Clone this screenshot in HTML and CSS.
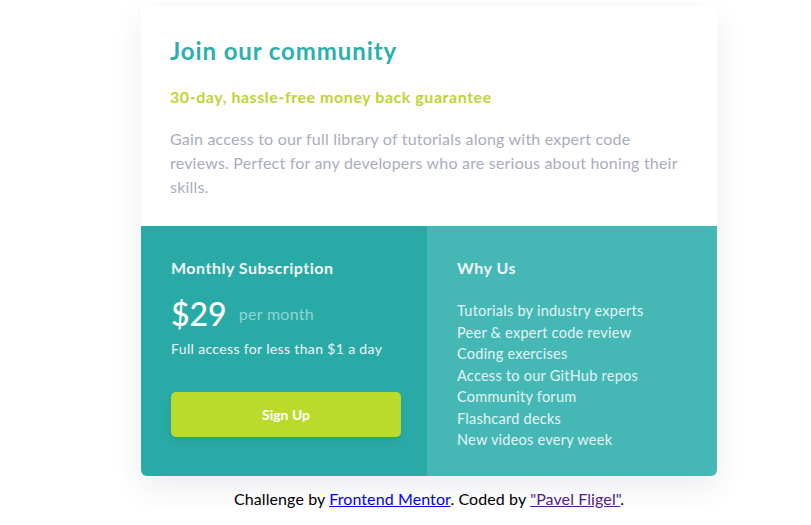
FILE: index.html
```html
<!DOCTYPE html>
<html lang="en">
<head>
<meta charset="utf-8">
<title>Single price grid component</title>
<link rel="stylesheet" href="styles.css">
</head>
<body>
<main class="page">
  <article class="card">
    <section class="intro">
      <h1 class="intro-title">Join our community</h1>
      <h2 class="intro-sub">30-day, hassle-free money back guarantee</h2>
      <p class="intro-text">Gain access to our full library of tutorials along with expert code reviews. Perfect for any developers who are serious about honing their skills.</p>
    </section>
    <div class="bottom">
      <section class="sub">
        <h3 class="panel-title">Monthly Subscription</h3>
        <div class="price"><span class="price-amount">$29</span><span class="price-per">per month</span></div>
        <p class="sub-text">Full access for less than $1 a day</p>
        <button class="signup" type="button">Sign Up</button>
      </section>
      <section class="why">
        <h3 class="panel-title">Why Us</h3>
        <ul class="why-list">
          <li>Tutorials by industry experts</li>
          <li>Peer &amp; expert code review</li>
          <li>Coding exercises</li>
          <li>Access to our GitHub repos</li>
          <li>Community forum</li>
          <li>Flashcard decks</li>
          <li>New videos every week</li>
        </ul>
      </section>
    </div>
  </article>
  <footer class="attribution">Challenge by <a href="#" class="link-fm">Frontend Mentor</a>. Coded by <a href="#" class="link-me">"Pavel Fligel"</a>.</footer>
</main>
</body>
</html>
```
FILE: styles.css
```css
* { box-sizing: border-box; }
html, body { margin: 0; padding: 0; background: #ffffff; }
body { font-family: Lato, "Noto Sans", sans-serif; }

.page {
  width: 576px;
  margin-left: 141px;
  padding-top: 6px;
}

.card {
  background: #ffffff;
  border-radius: 6px;
  box-shadow: 0 12px 30px rgba(40, 60, 90, 0.09);
  overflow: hidden;
}

.intro { padding: 30px 29px 27px; }

.intro-title {
  margin: 0;
  font-size: 24px;
  line-height: 29px;
  font-weight: 700;
  letter-spacing: 0.9px;
  color: #2bb0ac;
}

.intro-sub {
  margin: 22px 0 0;
  font-size: 16px;
  line-height: 20px;
  font-weight: 700;
  letter-spacing: 0.55px;
  color: #bcd535;
}

.intro-text {
  margin: 20px 0 0;
  font-size: 16px;
  line-height: 24px;
  letter-spacing: 0.2px;
  color: #a9adbd;
}

.bottom {
  display: grid;
  grid-template-columns: 286px 1fr;
  color: #ffffff;
}

.sub { background: #2aaaa6; padding: 30px 26px 38px 30px; }
.why { background: #45b8b6; padding: 30px 30px 25px 30px; }

.panel-title {
  margin: 0;
  font-size: 16px;
  line-height: 24px;
  font-weight: 700;
  letter-spacing: 0.5px;
  color: #eef6f6;
}

.price {
  margin-top: 13px;
  display: flex;
  align-items: center;
  height: 40px;
}
.price-amount { font-size: 32px; font-weight: 500; color: #ffffff; }
.price-per { margin-left: 12px; font-size: 16px; letter-spacing: 0.3px; color: #8fd6d3; }

.sub-text {
  margin: 6px 0 0;
  font-size: 14px;
  line-height: 20px;
  letter-spacing: 0.35px;
  color: #eaf7f6;
}

.signup {
  margin-top: 33px;
  width: 230px;
  height: 45px;
  border: 0;
  border-radius: 5px;
  background: #bbdb2c;
  color: #ffffff;
  font-family: inherit;
  font-size: 14px;
  font-weight: 700;
  box-shadow: 0 4px 8px rgba(0, 0, 0, 0.08);
}

.why-list {
  list-style: none;
  margin: 20px 0 0;
  padding: 0;
  font-size: 14.5px;
  line-height: 21.5px;
  letter-spacing: 0.25px;
  color: #e4f4f4;
}

.attribution {
  margin-top: 13px;
  text-align: center;
  font-size: 16px;
  line-height: 20px;
  letter-spacing: 0.1px;
  color: #000000;
}
.link-fm { color: #0000ee; }
.link-me { color: #551a8b; }
```
